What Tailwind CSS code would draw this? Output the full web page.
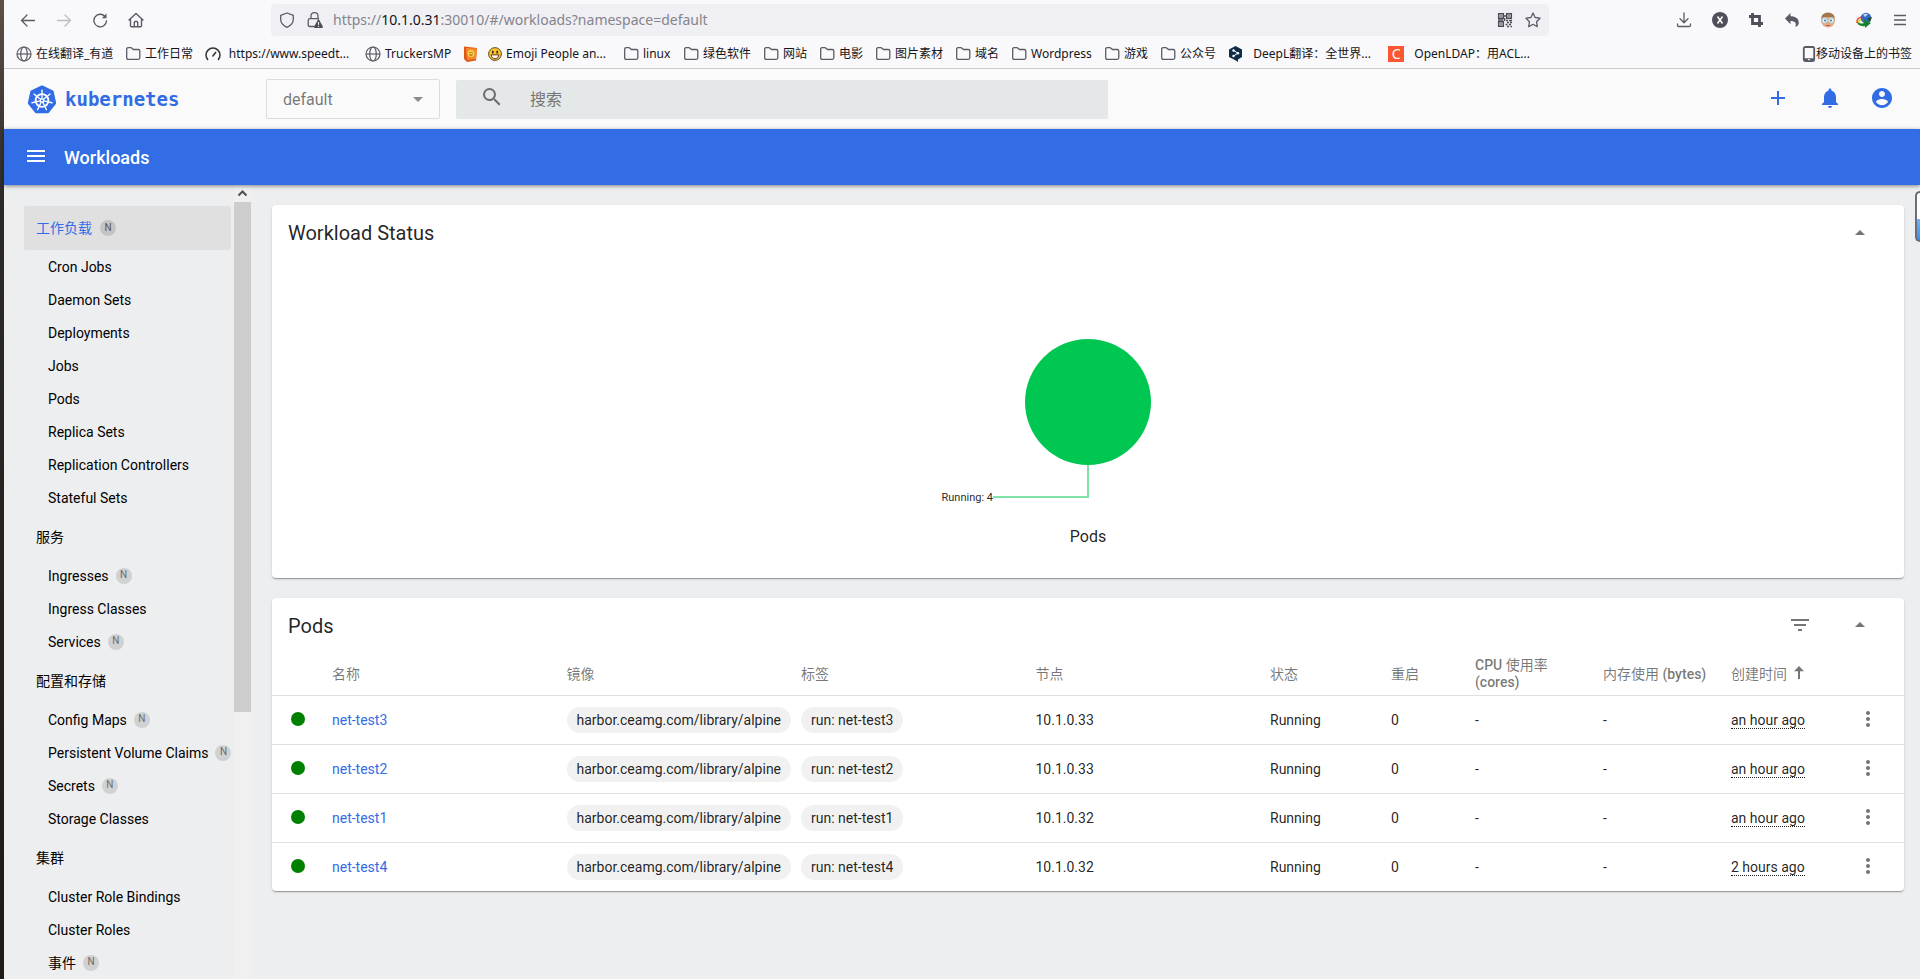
<!DOCTYPE html>
<html lang="zh-CN">
<head>
    <meta charset="UTF-8">
    <meta name="viewport" content="width=device-width, initial-scale=1.0">
    <title>Kubernetes Dashboard</title>
    <script src="https://cdn.jsdelivr.net/npm/@tailwindcss/browser@4"></script>
</head>
<body class="flex h-screen overflow-hidden bg-[#edeef0] font-['Roboto','Noto_Sans_CJK_SC',sans-serif] text-sm text-black/87">
    <!-- Shared icons -->
    <svg class="hidden">
        <symbol id="folder" viewBox="0 0 16 16"><path d="M1.7 3.2q0-1.5 1.500-1.500h2.600q.7 0 1.200.5l1.400 1.300h4.900q1.500 0 1.500 1.500v6.800q0 1.500-1.500 1.500H3.200q-1.500 0-1.500-1.500z" fill="none" stroke="#5b5b66" stroke-width="1.300"/></symbol>
        <symbol id="globe" viewBox="0 0 16 16"><g fill="none" stroke="#5b5b66" stroke-width="1.200"><circle cx="8" cy="8" r="7"/><ellipse cx="8" cy="8" rx="3.300" ry="7"/><path d="M1 8h14"/></g></symbol>
        <symbol id="dropup" viewBox="0 0 24 24"><path d="M7 14l5-5 5 5z"/></symbol>
        <symbol id="more" viewBox="0 0 24 24"><path d="M12 8c1.100 0 2-.9 2-2s-.9-2-2-2-2 .9-2 2 .9 2 2 2zm0 2c-1.100 0-2 .9-2 2s.9 2 2 2 2-.9 2-2-.9-2-2-2zm0 6c-1.100 0-2 .9-2 2s.9 2 2 2 2-.9 2-2-.9-2-2-2z"/></symbol>
    </svg>

    <!-- Desktop edge -->
    <div class="w-1 shrink-0 bg-linear-to-b from-[#5f5048] via-[#2c2a29] via-20% to-[#1d1a17]"></div>

    <div class="flex min-w-0 flex-1 flex-col">
        <!-- Browser toolbar -->
        <div class="shrink-0 border-b border-[#cccccf] bg-[#f9f9fb] font-['Noto_Sans','Noto_Sans_CJK_SC',sans-serif] text-[#15141a]">
            <div class="flex h-10 items-center pr-3">
                <div class="flex w-[267px] shrink-0 items-center gap-5 pl-4">
                    <button aria-label="Back"><svg class="size-4" viewBox="0 0 16 16" fill="none" stroke="#5b5b66" stroke-width="1.300" stroke-linecap="round" stroke-linejoin="round"><path d="M14.500 8.500h-13M7 3L1.500 8.500 7 14"/></svg></button>
                    <button aria-label="Forward"><svg class="size-4" viewBox="0 0 16 16" fill="none" stroke="#bcbcc2" stroke-width="1.300" stroke-linecap="round" stroke-linejoin="round"><path d="M1.500 8.500h13M9 3l5.500 5.500L9 14"/></svg></button>
                    <button aria-label="Reload"><svg class="size-4" viewBox="0 0 16 16" fill="none" stroke="#5b5b66" stroke-width="1.400" stroke-linecap="round"><path d="M12.800 4.200A6.300 6.300 0 1 0 14.500 9"/><path d="M14.500 1.500v4.700H9.800z" fill="#5b5b66" stroke="none"/></svg></button>
                    <button aria-label="Home"><svg class="size-4" viewBox="0 0 16 16" fill="none" stroke="#5b5b66" stroke-width="1.400" stroke-linejoin="round" stroke-linecap="round"><path d="M1 8l7-6.500L15 8M2.500 7v6.500q0 1.200 1.200 1.200h8.600q1.200 0 1.200-1.200V7M6.300 14.500v-4q0-1 1-1h1.400q1 0 1 1v4"/></svg></button>
                </div>
                <div class="flex h-8 max-w-[1278px] flex-1 items-center rounded bg-[#f0f0f4] pr-2 pl-2">
                    <svg class="size-4" viewBox="0 0 16 16" fill="none" stroke="#5b5b66" stroke-width="1.300" stroke-linejoin="round"><path d="M8 1l6.300 2.300v4C14.300 11 12 13.600 8 15.300 4 13.600 1.700 11 1.700 7.300v-4z"/></svg>
                    <svg class="ml-3 size-4" viewBox="0 0 16 16"><path d="M4 6.500V4q0-3.300 3.500-3.300T11 4v2.500M8 14.500H3q-1.800 0-1.800-1.800V8.500q0-1.800 1.800-1.800h9" fill="none" stroke="#5b5b66" stroke-width="1.300"/><path d="M11 7.500q.5-.8 1 0l3.900 7.300q.2.900-.7 1.200H7.800q-.9-.3-.7-1.200z" fill="#4c4c56"/><path d="M11.500 10v2.800M11.500 13.800v1" stroke="#fff" stroke-width="1.100"/></svg>
                    <!-- The host is highlighted, so this is an editable box rather than an input -->
                    <div role="textbox" aria-label="Address" contenteditable="true" spellcheck="false" class="ml-2 min-w-0 flex-1 pl-0.5 text-sm text-[#84848c]">https://<span class="text-[#15141a]">10.1.0.31</span>:30010/#/workloads?namespace=default</div>
                    <svg class="size-4" viewBox="0 0 16 16" fill="none" stroke="#4c4c56" stroke-width="1.500"><path d="M1.700 1.700h4.600v4.600H1.700zM9.700 1.700h4.600v4.600H9.700zM1.700 9.700h4.600v4.600H1.700z"/><path d="M3.200 4h1.600M11.200 4h1.600M3.200 12h1.600M6.500 4h3M7.500 6v3M1 8h5M9 8.500h2M12 8.500h3M10 10.500h2M13 10.500h2M8.500 12.500h2M12 12.500h2M10 14.500h2M13.500 14.500H15" stroke-width="1.600"/></svg>
                    <button aria-label="Bookmark this page" class="ml-3"><svg class="block size-4" viewBox="0 0 16 16" fill="none" stroke="#5b5b66" stroke-width="1.300" stroke-linejoin="round"><path d="M8 1l2.100 4.500 4.900.7-3.500 3.500.8 5L8 12.300l-4.300 2.400.8-5L1 6.200l4.900-.7z"/></svg></button>
                </div>
                <div class="ml-auto flex items-center gap-5">
                    <button aria-label="Downloads"><svg class="block size-4" viewBox="0 0 16 16" fill="none" stroke="#5b5b66" stroke-width="1.300" stroke-linecap="round" stroke-linejoin="round"><path d="M8 1v9.500M4 6.800l4 3.900 4-3.900M1.500 12v1.300q0 1.200 1.200 1.200h10.600q1.200 0 1.200-1.200V12"/></svg></button>
                    <button aria-label="XPath"><svg class="block size-4" viewBox="0 0 16 16"><circle cx="8" cy="8" r="8" fill="#4f4e5a"/><path d="M5.500 4.500l5 7M10.500 4.500l-5 7" stroke="#fff" stroke-width="1.500"/></svg></button>
                    <button aria-label="Screenshot"><svg class="block size-4" viewBox="0 0 16 16" fill="none" stroke="#4f4e5a" stroke-width="2.800"><path d="M4.500 1v10.500H15M1 4.500h10.500V15"/></svg></button>
                    <button aria-label="Undo close tab"><svg class="block size-4" viewBox="0 0 16 16" fill="#5b5b66"><path d="M6.500 1v3.200c5 0 8.300 2.300 8.300 6.300 0 2-1 3.500-3.500 4.500 1.500-3.800 0-6-4.800-6v3.200L1 6.600z"/></svg></button>
                    <button aria-label="User agent"><svg class="block size-4" viewBox="0 0 16 16"><circle cx="8" cy="8.500" r="7" fill="#e4a983"/><path d="M1 7q.5-6.500 7-6.500T15 7l-2-2H3z" fill="#a1764b"/><circle cx="4.700" cy="8.500" r="2.700" fill="#e8f4f5" stroke="#a9c4c8"/><circle cx="11.300" cy="8.500" r="2.700" fill="#e8f4f5" stroke="#a9c4c8"/><circle cx="5" cy="8.500" r="1" fill="#3a7f8c"/><circle cx="11" cy="8.500" r="1" fill="#3a7f8c"/><path d="M6 13.500h4" stroke="#c75a4b"/></svg></button>
                    <button aria-label="IDM"><svg class="block size-4" viewBox="0 0 16 16"><path d="M1 11q-.5-6 6-6" fill="none" stroke="#e8462c" stroke-width="1.500"/><path d="M2.500 12q0-5 5-5.500" fill="none" stroke="#f3d22b" stroke-width="2"/><circle cx="10" cy="6" r="5.300" fill="#3668c4"/><path d="M7 2.500q3-1.500 5 0L9 5z" fill="#bcd8f5"/><path d="M1 9.500q2.500 3 7 1.500V7.500l7 3.500-6 5v-2Q2 15 1 9.500z" fill="#18812b"/><path d="M11 6.500l5-1.500-2 5z" fill="#1d4f2c"/></svg></button>
                    <button aria-label="Menu"><svg class="block size-4" viewBox="0 0 16 16" stroke="#5b5b66" stroke-width="1.300"><path d="M2 3.500h12M2 8h12M2 12.500h12"/></svg></button>
                </div>
            </div>

            <!-- Bookmarks bar -->
            <nav class="flex h-7 items-center gap-3 overflow-hidden pr-2 pl-3 text-xs whitespace-nowrap">
                <a href="#" class="flex shrink-0 items-center gap-1"><svg class="size-4"><use href="#globe"/></svg><span class="w-[77px]">在线翻译_有道</span></a>
                <a href="#" class="flex shrink-0 items-center gap-1"><svg class="size-4"><use href="#folder"/></svg>工作日常</a>
                <a href="#" class="flex shrink-0 items-center gap-1"><svg class="size-4" viewBox="0 0 16 16" fill="none" stroke="#333" stroke-width="1.500"><path d="M3 14A7 7 0 1 1 13 14M7.500 10.500L11 6"/></svg><span class="w-32 text-center">https://www.speedt...</span></a>
                <a href="#" class="flex shrink-0 items-center gap-1"><svg class="size-4"><use href="#globe"/></svg><span class="w-[66px]">TruckersMP</span></a>
                <a href="#" class="flex shrink-0 items-center gap-1">
                    <svg class="size-4" viewBox="0 0 16 16"><path d="M1 .5L14 2l-1 12.500L4 16 1 13z" fill="#dc5a16"/><path d="M3 2l11 .5-1 10.500-9 1z" fill="#f58a2c"/><circle cx="8" cy="7.500" r="3.500" fill="#fbcf45"/><path d="M6.300 8.500q1.700 1.700 3.300 0M7 6v1M9 6v1" stroke="#8a4a10" fill="none"/></svg>
                    <span class="flex w-32 items-center justify-center gap-1">
                        <svg class="size-3.5" viewBox="0 0 16 16"><circle cx="8" cy="8" r="7.300" fill="#fcc331" stroke="#4a3a10"/><ellipse cx="5.500" cy="5.800" rx="1" ry="1.800" fill="#222"/><ellipse cx="10.500" cy="5.800" rx="1" ry="1.800" fill="#222"/><path d="M3.500 9h9q-.5 4.500-4.500 4.500T3.500 9z" fill="#fff" stroke="#5a2a10"/></svg>
                        Emoji People an...
                    </span>
                </a>
                <a href="#" class="flex shrink-0 items-center gap-1"><svg class="size-4"><use href="#folder"/></svg><span class="w-7">linux</span></a>
                <a href="#" class="flex shrink-0 items-center gap-1"><svg class="size-4"><use href="#folder"/></svg>绿色软件</a>
                <a href="#" class="flex shrink-0 items-center gap-1"><svg class="size-4"><use href="#folder"/></svg>网站</a>
                <a href="#" class="flex shrink-0 items-center gap-1"><svg class="size-4"><use href="#folder"/></svg>电影</a>
                <a href="#" class="flex shrink-0 items-center gap-1"><svg class="size-4"><use href="#folder"/></svg>图片素材</a>
                <a href="#" class="flex shrink-0 items-center gap-1"><svg class="size-4"><use href="#folder"/></svg>域名</a>
                <a href="#" class="flex shrink-0 items-center gap-1"><svg class="size-4"><use href="#folder"/></svg><span class="w-[61px]">Wordpress</span></a>
                <a href="#" class="flex shrink-0 items-center gap-1"><svg class="size-4"><use href="#folder"/></svg>游戏</a>
                <a href="#" class="flex shrink-0 items-center gap-1"><svg class="size-4"><use href="#folder"/></svg>公众号</a>
                <a href="#" class="flex shrink-0 items-center gap-1"><svg class="size-4" viewBox="0 0 16 16"><path d="M7.500 0l6.500 3.500v7.500l-4 2.500v2.500l-3-2L1 11V3.500z" fill="#0f2b46"/><path d="M5.500 4.500l4.500 2.700-4.500 2.800" fill="none" stroke="#fff"/><circle cx="5.500" cy="4.500" r="1.200" fill="#fff"/><circle cx="10" cy="7.200" r="1.200" fill="#fff"/><circle cx="5.500" cy="10" r="1.200" fill="#fff"/></svg><span class="w-32 text-center">DeepL翻译：全世界...</span></a>
                <a href="#" class="flex shrink-0 items-center gap-1"><span class="flex size-4 items-center justify-center bg-[#fc5531] text-sm/4 text-white">C</span><span class="w-32 text-center">OpenLDAP：用ACL...</span></a>
                <a href="#" class="ml-auto flex shrink-0 items-center"><svg class="h-4 w-3.5" viewBox="0 0 14 16"><rect x="1.800" y="1" width="10.400" height="14" rx="1.500" fill="none" stroke="#5b5b66" stroke-width="1.800"/><path d="M2 13.500h10" stroke="#5b5b66" stroke-width="2.500"/><path d="M6 13.700h2" stroke="#fff"/></svg>移动设备上的书签</a>
            </nav>
        </div>

        <!-- Dashboard header -->
        <header class="flex h-[60px] shrink-0 items-center bg-[#fafafa] pr-[26px] pl-[23px]">
            <a href="#" class="flex w-[239px] shrink-0 items-center gap-2 pt-0.5 font-['DejaVu_Sans_Mono',monospace] text-[19px] font-bold text-[#326ce5]">
                <svg class="size-[30px]" viewBox="0 0 32 32">
                    <path d="M16 2l11 5.200 2.600 12-7.500 9.400H9.900L2.400 19.200 5 7.200z" fill="#326ce5" stroke="#326ce5" stroke-width="3" stroke-linejoin="round"/>
                    <g fill="none" stroke="#fff" stroke-width="1.400" stroke-linecap="round">
                        <circle cx="16" cy="16.500" r="6.800" stroke-width="2"/>
                        <path d="M16 14.500V5.500"/>
                        <path d="M16 14.500V5.500" transform="rotate(51.430 16 16.500)"/>
                        <path d="M16 14.500V5.500" transform="rotate(102.860 16 16.500)"/>
                        <path d="M16 14.500V5.500" transform="rotate(154.290 16 16.500)"/>
                        <path d="M16 14.500V5.500" transform="rotate(205.710 16 16.500)"/>
                        <path d="M16 14.500V5.500" transform="rotate(257.140 16 16.500)"/>
                        <path d="M16 14.500V5.500" transform="rotate(308.570 16 16.500)"/>
                        <circle cx="16" cy="16.500" r="1.800"/>
                    </g>
                </svg>
                kubernetes
            </a>
            <div class="relative w-[174px] shrink-0">
                <select aria-label="Namespace" class="h-10 w-full appearance-none rounded-xs border border-[#dcdcdc] px-4 pt-0.5 text-base text-black/54">
                    <option>default</option>
                </select>
                <svg class="pointer-events-none absolute top-[18px] right-[17px] h-[5px] w-2.5 fill-[#8c8c8c]" viewBox="0 0 10 5"><path d="M0 0h10L5 5z"/></svg>
            </div>
            <form class="ml-4 flex h-[39px] w-[652px] items-center rounded-xs bg-[#e4e8e8] pl-6">
                <svg class="mb-1 size-6 shrink-0 fill-[#6c6e6e]" viewBox="0 0 24 24"><path d="M15.500 14h-.79l-.28-.27A6.471 6.471 0 0 0 16 9.500 6.500 6.500 0 1 0 9.500 16c1.610 0 3.090-.59 4.230-1.570l.27.28v.79l5 4.990L20.490 19l-4.990-5zm-6 0C7.010 14 5 11.990 5 9.500S7.010 5 9.500 5 14 7.010 14 9.500 11.990 14 9.500 14z"/></svg>
                <input type="text" aria-label="搜索" placeholder="搜索" class="ml-[26px] min-w-0 flex-1 bg-transparent pt-0.5 text-base placeholder:text-[#757575]">
            </form>
            <div class="ml-auto flex items-center gap-7 pb-0.5">
                <button aria-label="Create"><svg class="block size-6 fill-[#326ce5]" viewBox="0 0 24 24"><path d="M19 13h-6v6h-2v-6H5v-2h6V5h2v6h6z"/></svg></button>
                <button aria-label="Notifications"><svg class="block size-6 fill-[#326ce5]" viewBox="0 0 24 24"><path d="M12 22c1.100 0 2-.9 2-2h-4c0 1.100.89 2 2 2zm6-6v-5c0-3.070-1.640-5.640-4.500-6.320V4c0-.83-.67-1.500-1.500-1.500s-1.500.67-1.500 1.500v.68C7.630 5.360 6 7.920 6 11v5l-2 2v1h16v-1z"/></svg></button>
                <button aria-label="Account"><svg class="block size-6 fill-[#326ce5]" viewBox="0 0 24 24"><path d="M12 2C6.480 2 2 6.480 2 12s4.480 10 10 10 10-4.480 10-10S17.520 2 12 2zm0 3c1.660 0 3 1.340 3 3s-1.340 3-3 3-3-1.340-3-3 1.340-3 3-3zm0 14.200c-2.500 0-4.710-1.280-6-3.220.03-1.990 4-3.080 6-3.080 1.990 0 5.970 1.090 6 3.080-1.290 1.940-3.500 3.220-6 3.220z"/></svg></button>
            </div>
        </header>

        <!-- Title bar -->
        <div class="z-10 flex h-14 shrink-0 items-center gap-4 bg-[#326de6] pl-5 text-white shadow-[0_1px_4px_rgba(0,0,0,0.45)]">
            <button aria-label="Toggle navigation" class="mb-0.5"><svg class="block size-6 fill-white" viewBox="0 0 24 24"><path d="M3 18h18v-2H3zm0-5h18v-2H3zm0-7v2h18V6z"/></svg></button>
            <h1 class="pt-0.5 text-lg font-medium">Workloads</h1>
        </div>

        <div class="flex min-h-0 flex-1">
            <!-- Sidebar -->
            <nav class="flex w-[230px] shrink-0 flex-col overflow-hidden pt-5 pr-[3px] pl-5 whitespace-nowrap text-black">
                <a href="#" class="mt-px flex h-11 shrink-0 items-center gap-2 rounded-xs bg-[#e0e0e0] pl-3 text-[#326de6]">工作负载<span class="flex size-4 items-center justify-center rounded-full bg-[#c4c4c4] text-[10px] text-[#555]">N</span></a>
                <a href="#" class="flex h-[33px] shrink-0 items-center pl-6">Cron Jobs</a>
                <a href="#" class="flex h-[33px] shrink-0 items-center pl-6">Daemon Sets</a>
                <a href="#" class="flex h-[33px] shrink-0 items-center pl-6">Deployments</a>
                <a href="#" class="flex h-[33px] shrink-0 items-center pl-6">Jobs</a>
                <a href="#" class="flex h-[33px] shrink-0 items-center pl-6">Pods</a>
                <a href="#" class="flex h-[33px] shrink-0 items-center pl-6">Replica Sets</a>
                <a href="#" class="flex h-[33px] shrink-0 items-center pl-6">Replication Controllers</a>
                <a href="#" class="flex h-[33px] shrink-0 items-center pl-6">Stateful Sets</a>

                <a href="#" class="mt-px flex h-11 shrink-0 items-center pl-3">服务</a>
                <a href="#" class="flex h-[33px] shrink-0 items-center gap-[7px] pl-6">Ingresses<span class="flex size-4 items-center justify-center rounded-full bg-[#d0d1d2] text-[10px] text-[#6c6c6c]">N</span></a>
                <a href="#" class="flex h-[33px] shrink-0 items-center pl-6">Ingress Classes</a>
                <a href="#" class="flex h-[33px] shrink-0 items-center gap-[7px] pl-6">Services<span class="flex size-4 items-center justify-center rounded-full bg-[#d0d1d2] text-[10px] text-[#6c6c6c]">N</span></a>

                <a href="#" class="mt-px flex h-11 shrink-0 items-center pl-3">配置和存储</a>
                <a href="#" class="flex h-[33px] shrink-0 items-center gap-[7px] pl-6">Config Maps<span class="flex size-4 items-center justify-center rounded-full bg-[#d0d1d2] text-[10px] text-[#6c6c6c]">N</span></a>
                <a href="#" class="flex h-[33px] shrink-0 items-center gap-[7px] pl-6">Persistent Volume Claims<span class="flex size-4 shrink-0 items-center justify-center rounded-full bg-[#d0d1d2] text-[10px] text-[#6c6c6c]">N</span></a>
                <a href="#" class="flex h-[33px] shrink-0 items-center gap-[7px] pl-6">Secrets<span class="flex size-4 items-center justify-center rounded-full bg-[#d0d1d2] text-[10px] text-[#6c6c6c]">N</span></a>
                <a href="#" class="flex h-[33px] shrink-0 items-center pl-6">Storage Classes</a>

                <a href="#" class="mt-px flex h-11 shrink-0 items-center pl-3">集群</a>
                <a href="#" class="flex h-[33px] shrink-0 items-center pl-6">Cluster Role Bindings</a>
                <a href="#" class="flex h-[33px] shrink-0 items-center pl-6">Cluster Roles</a>
                <a href="#" class="flex h-[33px] shrink-0 items-center gap-[7px] pl-6">事件<span class="flex size-4 items-center justify-center rounded-full bg-[#d0d1d2] text-[10px] text-[#6c6c6c]">N</span></a>
            </nav>
            <!-- Sidebar scrollbar -->
            <div class="w-[17px] shrink-0 bg-[#f0f0f0]">
                <svg class="block size-[17px]" viewBox="0 0 17 17" fill="none" stroke="#505050" stroke-width="2"><path d="M4.500 10.500l4-4 4 4"/></svg>
                <div class="h-[510px] bg-[#cdcdcd]"></div>
            </div>

            <!-- Content -->
            <main class="flex min-w-0 flex-1 flex-col gap-5 pt-5 pr-4 pl-[21px]">
                <section class="rounded bg-white pb-[29px] shadow-[0_2px_1px_-1px_rgba(0,0,0,0.2),0_1px_1px_rgba(0,0,0,0.14),0_1px_3px_rgba(0,0,0,0.12)]">
                    <div class="flex h-14 items-center justify-between pr-8 pl-4">
                        <h2 class="text-xl">Workload Status</h2>
                        <button aria-label="Collapse"><svg class="block size-6 fill-[#757575]"><use href="#dropup"/></svg></button>
                    </div>
                    <figure class="flex flex-col items-center">
                        <svg class="h-[264px] w-[400px]" viewBox="0 0 400 264">
                            <circle cx="200" cy="141" r="63" fill="#00c752"/>
                            <path d="M200 204v32h-95" fill="none" stroke="#7fe3a8" stroke-width="2"/>
                            <text x="105" y="240" text-anchor="end" class="fill-black/87 text-[11px]">Running: 4</text>
                        </svg>
                        <figcaption class="text-base">Pods</figcaption>
                    </figure>
                </section>

                <section class="rounded bg-white shadow-[0_2px_1px_-1px_rgba(0,0,0,0.2),0_1px_1px_rgba(0,0,0,0.14),0_1px_3px_rgba(0,0,0,0.12)]">
                    <div class="flex h-14 items-center justify-between pr-8 pl-4">
                        <h2 class="text-xl">Pods</h2>
                        <div class="flex gap-9 pb-0.5">
                            <button aria-label="Filter"><svg class="block size-6 fill-[#757575]" viewBox="0 0 24 24"><path d="M10 18h4v-2h-4zM3 6v2h18V6zm3 7h12v-2H6z"/></svg></button>
                            <button aria-label="Collapse"><svg class="block size-6 fill-[#757575]"><use href="#dropup"/></svg></button>
                        </div>
                    </div>
                    <table class="w-full table-fixed text-left">
                        <colgroup>
                            <col class="w-[60px]">
                            <col><col><col><col>
                            <col class="w-[121px]">
                            <col class="w-[84px]">
                            <col class="w-[128px]">
                            <col class="w-[128px]">
                            <col class="w-[119px]">
                            <col class="w-[54px]">
                        </colgroup>
                        <thead>
                            <tr class="h-[41px] border-b border-[#e0e0e0] text-sm/[17px] text-black/54 *:font-normal">
                                <th></th>
                                <th>名称</th>
                                <th>镜像</th>
                                <th>标签</th>
                                <th>节点</th>
                                <th>状态</th>
                                <th>重启</th>
                                <th><span class="font-medium">CPU</span> 使用率<br><span class="font-medium">(cores)</span></th>
                                <th>内存使用 <span class="font-medium">(bytes)</span></th>
                                <th><span class="flex items-center gap-1">创建时间 <svg class="mb-0.5 size-4 fill-[#757575]" viewBox="0 0 16 16"><path d="M8 1l5 5.200H9V14H7V6.200H3z"/></svg></span></th>
                                <th></th>
                            </tr>
                        </thead>
                        <tbody>
                            <tr class="h-[49px] border-b border-[#e0e0e0]">
                                <td class="pb-0.5"><div class="ml-[19px] size-3.5 rounded-full bg-[#008000]"></div></td>
                                <td><a href="#" class="text-[#326de6]">net-test3</a></td>
                                <td><span class="inline-block rounded-full bg-[#f1f1f1] px-2.5 py-[3px] whitespace-nowrap">harbor.ceamg.com/library/alpine</span></td>
                                <td><span class="inline-block rounded-full bg-[#f1f1f1] px-2.5 py-[3px] whitespace-nowrap">run: net-test3</span></td>
                                <td>10.1.0.33</td>
                                <td>Running</td>
                                <td>0</td>
                                <td>-</td>
                                <td>-</td>
                                <td><span class="border-b border-dotted border-black/87">an hour ago</span></td>
                                <td class="pb-0.5"><button aria-label="Actions" class="block pl-1.5"><svg class="block size-6 fill-[#757575]"><use href="#more"/></svg></button></td>
                            </tr>
                            <tr class="h-[49px] border-b border-[#e0e0e0]">
                                <td class="pb-0.5"><div class="ml-[19px] size-3.5 rounded-full bg-[#008000]"></div></td>
                                <td><a href="#" class="text-[#326de6]">net-test2</a></td>
                                <td><span class="inline-block rounded-full bg-[#f1f1f1] px-2.5 py-[3px] whitespace-nowrap">harbor.ceamg.com/library/alpine</span></td>
                                <td><span class="inline-block rounded-full bg-[#f1f1f1] px-2.5 py-[3px] whitespace-nowrap">run: net-test2</span></td>
                                <td>10.1.0.33</td>
                                <td>Running</td>
                                <td>0</td>
                                <td>-</td>
                                <td>-</td>
                                <td><span class="border-b border-dotted border-black/87">an hour ago</span></td>
                                <td class="pb-0.5"><button aria-label="Actions" class="block pl-1.5"><svg class="block size-6 fill-[#757575]"><use href="#more"/></svg></button></td>
                            </tr>
                            <tr class="h-[49px] border-b border-[#e0e0e0]">
                                <td class="pb-0.5"><div class="ml-[19px] size-3.5 rounded-full bg-[#008000]"></div></td>
                                <td><a href="#" class="text-[#326de6]">net-test1</a></td>
                                <td><span class="inline-block rounded-full bg-[#f1f1f1] px-2.5 py-[3px] whitespace-nowrap">harbor.ceamg.com/library/alpine</span></td>
                                <td><span class="inline-block rounded-full bg-[#f1f1f1] px-2.5 py-[3px] whitespace-nowrap">run: net-test1</span></td>
                                <td>10.1.0.32</td>
                                <td>Running</td>
                                <td>0</td>
                                <td>-</td>
                                <td>-</td>
                                <td><span class="border-b border-dotted border-black/87">an hour ago</span></td>
                                <td class="pb-0.5"><button aria-label="Actions" class="block pl-1.5"><svg class="block size-6 fill-[#757575]"><use href="#more"/></svg></button></td>
                            </tr>
                            <tr class="h-[49px]">
                                <td class="pb-0.5"><div class="ml-[19px] size-3.5 rounded-full bg-[#008000]"></div></td>
                                <td><a href="#" class="text-[#326de6]">net-test4</a></td>
                                <td><span class="inline-block rounded-full bg-[#f1f1f1] px-2.5 py-[3px] whitespace-nowrap">harbor.ceamg.com/library/alpine</span></td>
                                <td><span class="inline-block rounded-full bg-[#f1f1f1] px-2.5 py-[3px] whitespace-nowrap">run: net-test4</span></td>
                                <td>10.1.0.32</td>
                                <td>Running</td>
                                <td>0</td>
                                <td>-</td>
                                <td>-</td>
                                <td><span class="border-b border-dotted border-black/87">2 hours ago</span></td>
                                <td class="pb-0.5"><button aria-label="Actions" class="block pl-1.5"><svg class="block size-6 fill-[#757575]"><use href="#more"/></svg></button></td>
                            </tr>
                        </tbody>
                    </table>
                </section>
            </main>
        </div>
    </div>

    <!-- Floating widget docked at the screen edge -->
    <div class="absolute top-[191px] right-0 z-20 h-[51px] w-[5px] rounded-l-md border-2 border-r-0 border-[#6b6e72] bg-linear-to-b from-white from-55% via-[#6cb4fb] via-56% to-[#3a8df5]"></div>
</body>
</html>
